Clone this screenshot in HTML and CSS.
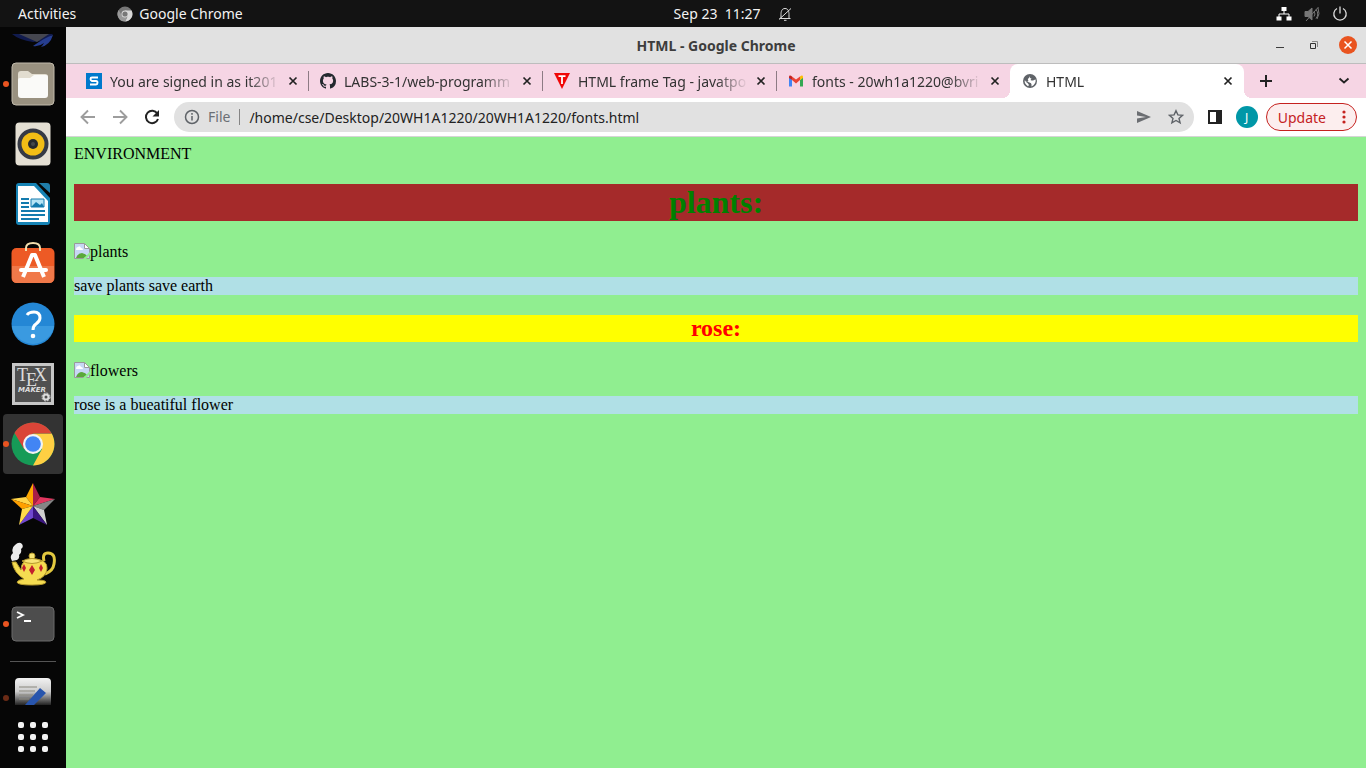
FILE: index.html
```html
<!DOCTYPE html>
<html lang="en">
<head>
<meta charset="utf-8">
<title>HTML</title>
<link rel="stylesheet" href="styles.css">
</head>
<body class="desktop">
<header class="topbar">
  <div class="topbar-side">
    <button class="top-btn">Activities</button>
    <button class="top-btn app-menu">
      <svg width="16" height="16" viewBox="0 0 16 16" aria-hidden="true"><circle cx="8" cy="8" r="7.500" fill="#777"/><path d="M8 4.500h6.600A7.500 7.500 0 0 1 8 15.500L11 9.800z" fill="#d8d8d8"/><path d="M5 9.800 1.600 4A7.500 7.500 0 0 0 8 15.500l2-3.800z" fill="#999"/><circle cx="8" cy="8" r="3.500" fill="#ddd"/><circle cx="8" cy="8" r="2.600" fill="#777"/></svg>
      <span>Google Chrome</span>
    </button>
  </div>
  <button class="top-btn clock">
    <span>Sep 23&nbsp; 11:27</span>
    <svg width="14" height="14" viewBox="0 0 14 14" fill="none" stroke="#ddd" aria-hidden="true"><path d="M1.500 11.500h11M3 11V7.500C3 5 3.500 1.500 7 1.500S11 5 11 7.500V11M1 12.500 13 1.500"/><path d="M6 13.300h2.500"/></svg>
  </button>
  <div class="topbar-side topbar-end">
    <button class="top-btn status" aria-label="System menu">
      <svg width="16" height="14" viewBox="0 0 16 14" aria-hidden="true"><path d="M5.500 0h5v4h-5zM.5 9.500h5v4h-5zM10.500 9.500h5v4h-5z" fill="#fff"/><path d="M8 4v3M3 10V7h10v3" stroke="#fff" fill="none"/></svg>
      <svg width="16" height="16" viewBox="0 0 16 16" fill="none" stroke="#777" aria-hidden="true"><path d="M1 5.500h3l4-3.500v12l-4-3.500H1z" fill="#777"/><path d="M10 5.500q2 2.500 0 5M12 3.500q3.500 4.500 0 9M14 2q2.500 6-1 11M2 15 14.500 1"/></svg>
      <svg width="16" height="16" viewBox="0 0 16 16" fill="none" stroke="#ddd" stroke-width="1.300" aria-hidden="true"><path d="M5 2.500a6.200 6.200 0 1 0 6 0M8 .5v7"/></svg>
    </button>
  </div>
</header>
<div class="workspace">
<nav class="dock" aria-label="Dock">
  <button class="dock-item dock-cut-top" aria-label="Thunderbird"><svg width="44" height="44" viewBox="0 0 44 44"><path d="M1 29q7 6 21 8 15-1 20-8z" fill="#111b4e"/><path d="M8 29h30L26 37z" fill="#45464f"/><path d="M22 41q11-8 20-11-3 10-12 12 2-2 3-4-5 4-11 3z" fill="#263d8f"/></svg></button>
  <button class="dock-item running" aria-label="Files"><svg width="44" height="44" viewBox="0 0 44 44"><rect x="1" y="1" width="42" height="42" rx="4" fill="#999180" stroke="#c0b9aa"/><path d="M7 12q0-3 3-3h7l4 3h13q3 0 3 3v18H7z" fill="#e2ddd0"/><path d="M7 18q0-2 2-2h10l4-3h12q2 0 2 2v18q0 3-3 3H10q-3 0-3-3z" fill="#fafaf8"/></svg></button>
  <button class="dock-item" aria-label="Rhythmbox"><svg width="44" height="44" viewBox="0 0 44 44"><rect x="4.500" y=".5" width="35" height="43" rx="4" fill="#e4dfd3"/><circle cx="22" cy="22" r="15.500" fill="#363a45"/><circle cx="22" cy="22" r="11.500" fill="#f2bd16"/><circle cx="22" cy="22" r="5" fill="#26292d"/><circle cx="22" cy="22" r="2" fill="#45484b"/></svg></button>
  <button class="dock-item" aria-label="LibreOffice Writer"><svg width="44" height="44" viewBox="0 0 44 44"><path d="M8 1h17l14 15v24q0 3-3 3H8q-3 0-3-3V4q0-3 3-3z" fill="#1683b5"/><path d="M7 4h16l14 15v21H7z" fill="#fff"/><path d="M28 1h8q3 0 3 3v7z" fill="#207eaa"/><path d="M10 17h8M10 21h8M10 25h8M10 29h24M10 33h24M10 37h18" stroke="#147bae" stroke-width="1.800"/><path d="M20 17h13v8H20z" fill="#b7e4f5" stroke="#147bae"/><path d="m20 25 5-5 4 3 2-2 2 4z" fill="#147bae"/></svg></button>
  <button class="dock-item" aria-label="Ubuntu Software"><svg width="44" height="44" viewBox="0 0 44 44"><rect x=".5" y="6" width="43" height="35" rx="5" fill="#ed5a25"/><path d="M1 24h42v12q0 5-5 5H6q-5 0-5-5z" fill="#f07849"/><path d="M15 9V6q0-5 7-5t7 5v3" fill="none" stroke="#f4dfae" stroke-width="2"/><path d="m12 35 9-22h3l9 22" fill="none" stroke="#fff" stroke-width="4" stroke-linejoin="round"/><path d="M10 28h25" stroke="#fff" stroke-width="4" stroke-linecap="round"/></svg></button>
  <button class="dock-item" aria-label="Help"><svg width="44" height="44" viewBox="0 0 44 44"><circle cx="22" cy="22" r="21.500" fill="#2487d5"/><path d="M.8 24h42.400A21.500 21.500 0 0 1 .8 24" fill="#3a9ae0"/><path d="M16 13q2-3 7-3 6 0 6 6 0 3-4 6-3 2-3 6" fill="none" stroke="#fff" stroke-width="3"/><circle cx="22" cy="34" r="2.300" fill="#fff"/></svg></button>
  <button class="dock-item" aria-label="Texmaker"><svg width="44" height="44" viewBox="0 0 44 44"><path d="M2.500 2.500h39v39h-39z" fill="#505050" stroke="#c6c6c6" stroke-width="3"/><g fill="#ddd" font-family="Liberation Serif, serif" font-size="18"><text x="6" y="19">T</text><text x="15" y="24">E</text><text x="23" y="19">X</text></g><text x="7" y="30" fill="#ddd" font-family="DejaVu Sans, sans-serif" font-size="7" font-weight="bold" font-style="italic">MAKER</text><circle cx="35" cy="35" r="2.500" fill="none" stroke="#ddd" stroke-width="2"/><circle cx="35" cy="35" r="4" fill="none" stroke="#ddd" stroke-dasharray="2 1.140"/></svg></button>
  <button class="dock-item running active" aria-label="Google Chrome"><svg width="44" height="44" viewBox="0 0 44 44"><circle cx="22" cy="22" r="21.500" fill="#169b57"/><path d="M22 11.500h18.700A21.500 21.500 0 0 1 22 43.500l9-16.500z" fill="#ffcf43"/><path d="M3.500 11A21.500 21.500 0 0 1 40.700 11.500H22L13 27z" fill="#da4538"/><circle cx="22" cy="22" r="10" fill="#f3f3f3"/><circle cx="22" cy="22" r="7.800" fill="#4285f4"/></svg></button>
  <button class="dock-item" aria-label="StarUML"><svg width="44" height="44" viewBox="0 0 44 44"><path d="M22 1v23l-7-9z" fill="#ffa800"/><path d="m22 1 7 14-7 9z" fill="#a81f48"/><path d="M0 17l15-2 7 9z" fill="#ffd54a"/><path d="M0 17l11 10 11-3z" fill="#ffa000"/><path d="m29 15 15 2-22 7z" fill="#e2365f"/><path d="m44 17-11 11-11-4z" fill="#858585"/><path d="m33 28 3 15-14-19z" fill="#d0d0d0"/><path d="M36 43 22 36V24z" fill="#3b1580"/><path d="M22 36 8 43l14-19z" fill="#7047cf"/><path d="m8 43 3-16 11-3z" fill="#ffdc4a"/></svg></button>
  <button class="dock-item" aria-label="Kettle"><svg width="46" height="44" viewBox="0 0 46 44"><path d="M2 19q-3-5 1-8-2-5 2-8 4-4 7-1 2 3-1 5 1 4-2 6 1 3-2 5z" fill="#ececec"/><path d="M34 19q-2-8 4-8 8 0 6 11-1 7-9 10" fill="none" stroke="#e2c83f" stroke-width="3"/><path d="M2 20h4l5 8q0-11 12-11 15 0 14 10-1 8-10 11 8 0 9 2 0 3-14 3-15 0-15-3 1-2 7-3Q4 31 2 20z" fill="#f5dc51" stroke="#b59a2c"/><circle cx="22" cy="14" r="3" fill="#f8e575" stroke="#b59a2c"/><path d="M12 19q10-5 20 0-10 5-20 0z" stroke="#b59a2c" fill="#f8e575"/><path d="m14 22 2 4-2 4-2-4zM22 23l3 5-3 5-3-5zM31 22l2 4-2 4-2-4z" fill="#c2202c"/></svg></button>
  <button class="dock-item running" aria-label="Terminal"><svg width="44" height="44" viewBox="0 0 44 44"><rect x="1" y="5" width="42" height="34" rx="4" fill="#4d4d4d" stroke="#6a6a6a"/><path d="m6 10 6 3-6 3M13 19h7" fill="none" stroke="#fff" stroke-width="1.800"/></svg></button>
  <hr class="dock-rule">
  <button class="dock-item dock-cut-bottom running dim" aria-label="Text Editor"><svg width="44" height="28" viewBox="0 0 44 28"><defs><linearGradient id="paper" x2="0" y2="1"><stop stop-color="#f2f2f2"/><stop offset=".5" stop-color="#ccc"/><stop offset="1" stop-color="#222"/></linearGradient></defs><path d="M4 28V5q0-4 4-4h28q4 0 4 4v23z" fill="url(#paper)"/><path d="M8 10h18M8 14h16M8 18h14M8 22h10" stroke="#8a887f"/><path d="M14 28 29 11l6 5-12 12z" fill="#2855ad"/></svg></button>
  <button class="dock-apps" aria-label="Show Applications"><svg width="30" height="30" viewBox="0 0 30 30" fill="#f2f2f2"><rect width="6" height="6" rx="2"/><rect x="12" width="6" height="6" rx="2"/><rect x="24" width="6" height="6" rx="2"/><rect y="12" width="6" height="6" rx="2"/><rect x="12" y="12" width="6" height="6" rx="2"/><rect x="24" y="12" width="6" height="6" rx="2"/><rect y="24" width="6" height="6" rx="2"/><rect x="12" y="24" width="6" height="6" rx="2"/><rect x="24" y="24" width="6" height="6" rx="2"/></svg></button>
</nav>
<section class="window">
  <div class="titlebar">
    <span class="title">HTML - Google Chrome</span>
    <div class="window-controls">
      <button class="icon-btn" aria-label="Minimize"><svg width="18" height="18" viewBox="0 0 18 18"><path d="M5 11.500h8" stroke="#3d3d3d"/></svg></button>
      <button class="icon-btn" aria-label="Restore"><svg width="18" height="18" viewBox="0 0 18 18" fill="none"><path d="M5.500 7.500h5v5h-5z" stroke="#333"/><path d="M7 5.500h5.500V11" stroke="#888"/></svg></button>
      <button class="icon-btn" aria-label="Close"><svg width="18" height="18" viewBox="0 0 18 18"><circle cx="9" cy="9" r="9" fill="#e95420"/><path d="m5.500 5.500 7 7m0-7-7 7" stroke="#fff" stroke-width="1.500"/></svg></button>
    </div>
  </div>
  <div class="tabstrip">
    <div class="tab">
      <svg width="16" height="16" viewBox="0 0 16 16"><path d="M0 0h16v16H0z" fill="#0079cc"/><path d="M12 4.500H6Q4.500 4.500 4.500 6t1.500 2h4q1.500 0 1.500 1.700T10 11.500H4" fill="none" stroke="#fff" stroke-width="1.900"/></svg>
      <button class="tab-title">You are signed in as it201</button><button class="icon-btn tab-close" aria-label="Close tab"><svg width="10" height="10" viewBox="0 0 10 10"><path d="m1.500 1.500 7 7m0-7-7 7" stroke="#222" stroke-width="1.700"/></svg></button>
    </div>
    <div class="tab">
      <svg width="16" height="16" viewBox="0 0 16 16"><path fill="#24292f" d="M8 0C3.580 0 0 3.580 0 8c0 3.540 2.290 6.530 5.470 7.590.4.070.55-.17.55-.38 0-.19-.01-.82-.01-1.490-2.010.37-2.530-.49-2.690-.94-.09-.23-.48-.94-.82-1.130-.28-.15-.68-.52-.01-.53.63-.01 1.080.58 1.230.82.72 1.210 1.870.87 2.330.66.07-.52.28-.87.51-1.070-1.780-.2-3.640-.89-3.640-3.950 0-.87.31-1.590.82-2.150-.08-.2-.36-1.020.08-2.120 0 0 .67-.21 2.200.82.64-.18 1.320-.27 2-.27s1.360.09 2 .27c1.530-1.040 2.200-.82 2.200-.82.44 1.100.16 1.920.08 2.120.51.56.82 1.270.82 2.150 0 3.070-1.870 3.750-3.650 3.950.29.25.54.73.54 1.480 0 1.070-.01 1.930-.01 2.200 0 .21.15.46.55.38A8 8 0 0 0 16 8c0-4.420-3.580-8-8-8z"/></svg>
      <button class="tab-title">LABS-3-1/web-programm</button><button class="icon-btn tab-close" aria-label="Close tab"><svg width="10" height="10" viewBox="0 0 10 10"><path d="m1.500 1.500 7 7m0-7-7 7" stroke="#222" stroke-width="1.700"/></svg></button>
    </div>
    <div class="tab">
      <svg width="16" height="16" viewBox="0 0 16 16"><path d="M0 0h16L8 16z" fill="#f00808"/><path d="M4.500 3.200h7M8 3v8" stroke="#fff" stroke-width="1.800"/></svg>
      <button class="tab-title">HTML frame Tag - javatpo</button><button class="icon-btn tab-close" aria-label="Close tab"><svg width="10" height="10" viewBox="0 0 10 10"><path d="m1.500 1.500 7 7m0-7-7 7" stroke="#222" stroke-width="1.700"/></svg></button>
    </div>
    <div class="tab">
      <svg width="16" height="16" viewBox="0 0 16 16"><path d="M1 4v9.500h3V7z" fill="#4285f4"/><path d="M15 4v9.500h-3V7z" fill="#34a853"/><path d="M4 7V3.500l4 3 4-3V7l-4 3.500z" fill="#ea4335"/><path d="M1 5V4q0-2 2-1.300l1 .8V7z" fill="#c5221f"/><path d="M15 5V4q0-2-2-1.300l-1 .8V7z" fill="#fbbc04"/></svg>
      <button class="tab-title">fonts - 20wh1a1220@bvri</button><button class="icon-btn tab-close" aria-label="Close tab"><svg width="10" height="10" viewBox="0 0 10 10"><path d="m1.500 1.500 7 7m0-7-7 7" stroke="#222" stroke-width="1.700"/></svg></button>
    </div>
    <div class="tab tab-active">
      <svg width="16" height="16" viewBox="0 0 16 16"><circle cx="8" cy="8" r="7" fill="#5f6368"/><path d="M8 2.500q-1 2.500 1.500 3l-1 1.500q2 1 3.500 0l1.700-.6Q14 11 9.500 13.500v-2q0-1.500-2-2L2.600 7.500Q2.500 11 6 13.200L7 12 5.500 10 2.500 8Q4 9 6.500 8q-1.500-2 .5-3z" fill="#fff"/></svg>
      <button class="tab-title">HTML</button><button class="icon-btn tab-close" aria-label="Close tab"><svg width="10" height="10" viewBox="0 0 10 10"><path d="m1.500 1.500 7 7m0-7-7 7" stroke="#222" stroke-width="1.700"/></svg></button>
    </div>
    <button class="icon-btn new-tab" aria-label="New tab"><svg width="12" height="12" viewBox="0 0 12 12"><path d="M6 0v12M0 6h12" stroke="#222" stroke-width="2"/></svg></button>
    <button class="icon-btn tab-search" aria-label="Search tabs"><svg width="12" height="12" viewBox="0 0 12 12" fill="none"><path d="m1.500 3.500 4.500 4 4.500-4" stroke="#222" stroke-width="1.800"/></svg></button>
  </div>
  <div class="toolbar">
    <div class="nav-buttons">
      <button class="icon-btn" aria-label="Back"><svg width="16" height="16" viewBox="0 0 16 16" fill="none" stroke="#9d9d9d" stroke-width="1.900"><path d="M15 8H2m6-6.500L1.500 8 8 14.500"/></svg></button>
      <button class="icon-btn" aria-label="Forward"><svg width="16" height="16" viewBox="0 0 16 16" fill="none" stroke="#9d9d9d" stroke-width="1.900"><path d="M1 8h13M8 1.500 14.500 8 8 14.500"/></svg></button>
      <button class="icon-btn" aria-label="Reload"><svg width="16" height="16" viewBox="0 0 16 16" fill="none"><path d="M13.300 4.500A6.200 6.200 0 1 0 14 10" stroke="#222" stroke-width="2"/><path d="M15 1v6.500H8.500z" fill="#222"/></svg></button>
    </div>
    <div class="omnibox">
      <svg width="16" height="16" viewBox="0 0 16 16" fill="none" stroke="#5f6368" stroke-width="1.500"><circle cx="8" cy="8" r="6.500"/><path d="M8 7v4.500M8 4v1.700"/></svg>
      <label class="scheme" for="address">File</label>
      <input class="address" id="address" type="text" value="/home/cse/Desktop/20WH1A1220/20WH1A1220/fonts.html">
      <button class="icon-btn" aria-label="Share"><svg width="16" height="16" viewBox="0 0 16 16"><path d="M1 2v4.500L10 8 1 9.500V14l14-6z" fill="#6b6e72"/></svg></button>
      <button class="icon-btn" aria-label="Bookmark"><svg width="16" height="16" viewBox="0 0 16 16"><path d="m8 1.700 1.900 4.200 4.600.4L11 9.400l1.100 4.500L8 11.500l-4.100 2.400L5 9.400 1.500 6.300l4.600-.4z" fill="none" stroke="#5f6368" stroke-width="1.400"/></svg></button>
    </div>
    <button class="icon-btn" aria-label="Side panel"><svg width="14" height="14" viewBox="0 0 14 14"><path d="M1 1h12v12H1z" fill="#fff" stroke="#222" stroke-width="2"/><path d="M8 1h5v12H8z" fill="#222"/></svg></button>
    <button class="avatar">J</button>
    <button class="update"><span>Update</span><svg width="4" height="14" viewBox="0 0 4 14" fill="#c5221f"><circle cx="2" cy="2" r="1.600"/><circle cx="2" cy="7" r="1.600"/><circle cx="2" cy="12" r="1.600"/></svg></button>
  </div>
  <main class="page">
    <div>ENVIRONMENT</div>
    <h1 class="plants">plants:</h1>
    <div class="missing"><svg width="16" height="16" viewBox="0 0 16 16"><path d="M.5.500h10l5 5v10H.5z" fill="#c7d7f5" stroke="#9a9a9a"/><path d="M2 7q0-3 2-3 2-2 3 1 2 0 2 2z" fill="#fff"/><path d="M2 15q2-5 6-5 4 1 5 3l-3 2z" fill="#5aa83a"/><path d="M10.500.5v5h5z" fill="#fff" stroke="#9a9a9a"/><path d="m16 9-7 7h3l4-4z" fill="#90ee90"/></svg><span>plants</span></div>
    <p class="note">save plants save earth</p>
    <h2 class="rose">rose:</h2>
    <div class="missing"><svg width="16" height="16" viewBox="0 0 16 16"><path d="M.5.500h10l5 5v10H.5z" fill="#c7d7f5" stroke="#9a9a9a"/><path d="M2 7q0-3 2-3 2-2 3 1 2 0 2 2z" fill="#fff"/><path d="M2 15q2-5 6-5 4 1 5 3l-3 2z" fill="#5aa83a"/><path d="M10.500.5v5h5z" fill="#fff" stroke="#9a9a9a"/><path d="m16 9-7 7h3l4-4z" fill="#90ee90"/></svg><span>flowers</span></div>
    <p class="note">rose is a bueatiful flower</p>
  </main>
</section>
</div>
</body>
</html>
```
FILE: styles.css
```css
* { box-sizing: border-box; }

.desktop {
  margin: 0;
  height: 100vh;
  display: flex;
  flex-direction: column;
  overflow: hidden;
  background: #060606;
  font-family: "Noto Sans", "Open Sans", sans-serif;
  font-size: 14px;
}

button {
  margin: 0;
  padding: 0;
  border: 0;
  background: none;
  color: inherit;
  font: inherit;
}

svg { display: block; flex: none; }

/* Top bar */
.topbar {
  display: flex;
  align-items: center;
  height: 27px;
  padding: 0 18px;
  background: #131313;
  color: #f2f2f2;
}
.topbar-side { display: flex; flex: 1; gap: 41px; }
.topbar-end { justify-content: flex-end; }
.top-btn { display: flex; align-items: center; line-height: 20px; }
.app-menu { gap: 6px; }
.clock { gap: 18px; padding-left: 100px; }
.status { gap: 12px; }

.workspace { display: flex; flex: 1; min-height: 0; }

/* Dock */
.dock {
  display: flex;
  flex-direction: column;
  align-items: center;
  flex: none;
  width: 66px;
  padding-top: 5px;
}
.dock-item {
  position: relative;
  display: flex;
  align-items: center;
  justify-content: center;
  flex: none;
  width: 60px;
  height: 60px;
  border-radius: 4px;
}
.dock-item.active { background: #333; }
.dock-item.running::before {
  content: "";
  position: absolute;
  left: 0;
  top: 50%;
  width: 6px;
  height: 6px;
  margin-top: -3px;
  border-radius: 50%;
  background: #e95420;
}
.dock-item.dim::before { top: 75%; background: #6b2b16; }
.dock-cut-top {
  height: 22px;
  align-items: flex-end;
  overflow: hidden;
  padding-bottom: 5px;
}
.dock-cut-bottom { height: 28px; }
.dock-rule {
  width: 46px;
  height: 1px;
  margin: 7px 0 15px;
  border: 0;
  background: #555;
}
.dock-apps { margin-top: 17px; }

/* Browser window */
.window {
  display: flex;
  flex-direction: column;
  flex: 1;
  min-width: 0;
}
.icon-btn { display: flex; align-items: center; justify-content: center; flex: none; }
.titlebar {
  display: grid;
  grid-template-columns: 1fr auto 1fr;
  align-items: center;
  height: 37px;
  padding: 0 9px;
  background: #e1e1e1;
  border-bottom: 1px solid #bdbdbd;
}
.title { grid-column: 2; color: #3d3d3d; font-weight: bold; }
.window-controls { display: flex; justify-content: flex-end; gap: 16px; }

.tabstrip {
  display: flex;
  height: 34px;
  padding: 0 16px 0 8px;
  background: #f6d5e4;
  color: #333;
}
.tab {
  display: flex;
  align-items: center;
  flex: 0 1 234px;
  min-width: 0;
  gap: 8px;
  padding: 0 10px 0 12px;
}
.tab + .tab { background: linear-gradient(#8d7b84, #8d7b84) left center / 1px 20px no-repeat; }
.tab-title {
  flex: 1;
  min-width: 0;
  overflow: hidden;
  white-space: nowrap;
  text-align: left;
  -webkit-mask-image: linear-gradient(to right, #000 calc(100% - 32px), transparent);
  mask-image: linear-gradient(to right, #000 calc(100% - 32px), transparent);
}
.tab + .tab-active {
  position: relative;
  padding-right: 11px;
  background: #fff;
  border-radius: 8px 8px 0 0;
}
.tab-active::before,
.tab-active::after {
  content: "";
  position: absolute;
  bottom: 0;
  width: 8px;
  height: 8px;
}
.tab-active::before {
  right: 100%;
  background: radial-gradient(circle at 0 0, transparent 8px, #fff 8px);
}
.tab-active::after {
  left: 100%;
  background: radial-gradient(circle at 100% 0, transparent 8px, #fff 8px);
}
.new-tab { margin-left: 16px; }
.tab-search { margin-left: auto; }

.toolbar {
  display: flex;
  align-items: center;
  gap: 14px;
  height: 39px;
  padding: 0 9px 0 14px;
  background: #fff;
  border-bottom: 1px solid #d5d5d5;
}
.nav-buttons { display: flex; gap: 16px; }
.omnibox {
  display: flex;
  align-items: center;
  flex: 1;
  min-width: 0;
  height: 30px;
  padding: 0 10px;
  border-radius: 15px;
  background: #e1e1e1;
}
.scheme {
  margin-left: 8px;
  padding-right: 9px;
  border-right: 1px solid #858585;
  color: #6b6f75;
  line-height: 16px;
}
.address {
  flex: 1;
  min-width: 0;
  padding: 0 0 0 9px;
  border: 0;
  outline: 0;
  background: transparent;
  color: #222;
  font: inherit;
}
.omnibox .icon-btn + .icon-btn { margin-left: 16px; }
.avatar {
  width: 22px;
  height: 22px;
  border-radius: 50%;
  background: #0097a7;
  color: #fff;
  font-size: 12px;
}
.update {
  display: flex;
  align-items: center;
  gap: 16px;
  height: 28px;
  margin-left: -6px;
  padding: 0 10px 0 11px;
  border: 1px solid #c5221f;
  border-radius: 14px;
  background: #fceeee;
  color: #c5221f;
}

/* Document */
.page {
  flex: 1;
  min-height: 0;
  overflow: hidden;
  padding: 8px;
  background: #90ee90;
  color: #000;
  font-family: "Liberation Serif", "Times New Roman", serif;
  font-size: 16px;
}
.plants {
  margin: 21px 0 22px;
  background: #a52a2a;
  color: #008000;
  font-size: 32px;
  text-align: center;
}
.missing { display: flex; }
.note { margin: 16px 0 20px; background: #b0e0e6; }
.rose {
  margin: 20px 0;
  background: #ff0;
  color: #f00;
  font-size: 24px;
  text-align: center;
}
```
